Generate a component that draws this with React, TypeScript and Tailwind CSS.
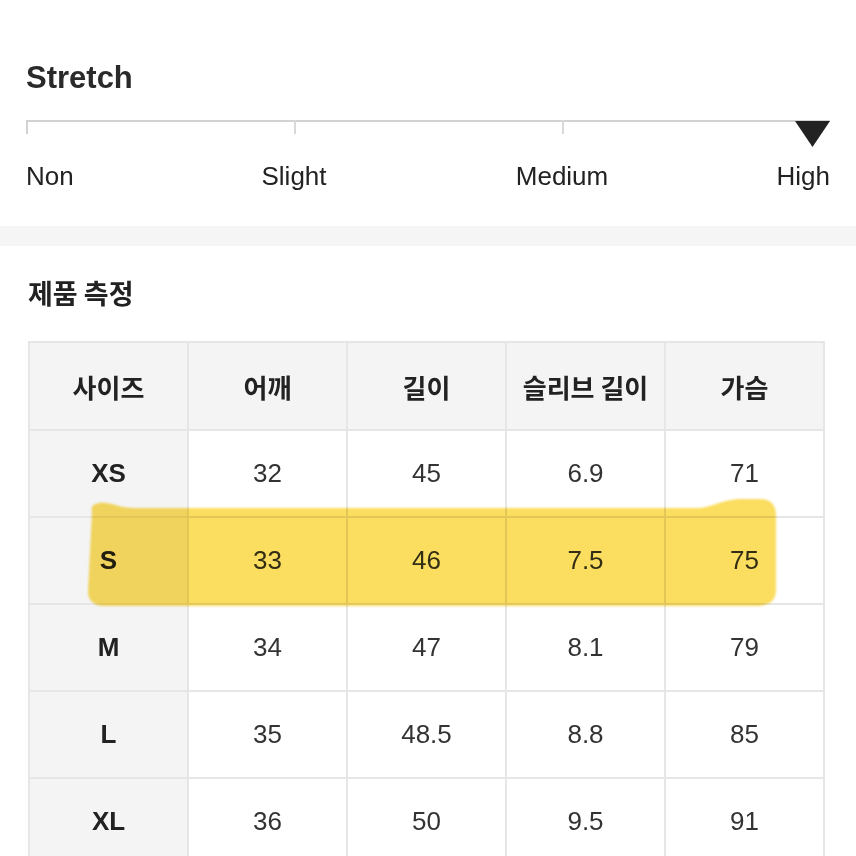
import React from "react";

const rows = [
  ["XS", "32", "45", "6.9", "71"],
  ["S", "33", "46", "7.5", "75"],
  ["M", "34", "47", "8.1", "79"],
  ["L", "35", "48.5", "8.8", "85"],
  ["XL", "36", "50", "9.5", "91"],
];

const headers = ["사이즈", "어깨", "길이", "슬리브 길이", "가슴"];

const KR = "font-['Noto_Sans_CJK_KR','Liberation_Sans',sans-serif]";

export default function App() {
  return (
    <div className="relative w-[856px] h-[856px] overflow-hidden bg-white text-[#222] font-['Liberation_Sans',Arial,sans-serif]">
      <div className="px-[26px] pt-[59px]">
        <div className="text-[31px] leading-[38px] font-bold text-[#2a2a2a]">Stretch</div>
        <svg className="mt-[23px] block" width="806" height="30" viewBox="0 0 806 30">
          <rect x="0" y="0" width="804" height="2" fill="#d2d2d2" />
          <rect x="0" y="0" width="2" height="14" fill="#d2d2d2" />
          <rect x="268" y="0" width="2" height="14" fill="#d9d9d9" />
          <rect x="536" y="0" width="2" height="14" fill="#d9d9d9" />
          <polygon points="769,1 804,1 786.5,27" fill="#222" />
        </svg>
        <div className="mt-[11px] flex justify-between h-[30px] text-[26px] leading-[30px] text-[#222]">
          <div className="w-0 flex justify-start whitespace-nowrap">Non</div>
          <div className="w-0 flex justify-center whitespace-nowrap">Slight</div>
          <div className="w-0 flex justify-center whitespace-nowrap">Medium</div>
          <div className="w-0 flex justify-end whitespace-nowrap">High</div>
        </div>
      </div>
      <div className="mt-[35px] h-[20px] bg-[#f5f5f5]" />
      <div className="px-[28px]">
        <div className={"mt-[29px] text-[27px] leading-[36px] font-bold text-[#222] " + KR}>제품 측정</div>
        <div className="mt-[30px] w-[797px] border-2 border-[#e6e6e6] bg-[#e6e6e6] grid grid-cols-5 gap-[2px]">
          {headers.map((h) => (
            <div
              key={h}
              className={
                "h-[86px] bg-[#f4f4f4] flex items-center justify-center text-[26px] font-semibold text-[#222] " + KR
              }
            >
              {h}
            </div>
          ))}
          {rows.map((r) =>
            r.map((c, i) => (
              <div
                key={r[0] + i}
                className={
                  i === 0
                    ? "h-[85px] bg-[#f4f4f4] flex items-center justify-center text-[26px] font-bold text-[#222]"
                    : "h-[85px] bg-white flex items-center justify-center text-[26px] text-[#333]"
                }
              >
                {c}
              </div>
            ))
          )}
        </div>
      </div>
      <svg
        className="absolute left-0 top-0 pointer-events-none mix-blend-multiply"
        width="856"
        height="856"
        viewBox="0 0 856 856"
        style={{ filter: "blur(1.2px)" }}
      >
        <path
          d="M92 512 C90 505 96 502 106 503 C116 504 120 508 135 508 L700 508 C712 507 722 500 738 499 L762 499 C772 500 776 506 776 516 L776 590 C776 600 770 605 758 606 L104 606 C94 606 88 600 88 592 Z"
          fill="#fad84a"
          fillOpacity="0.88"
        />
      </svg>
    </div>
  );
}
